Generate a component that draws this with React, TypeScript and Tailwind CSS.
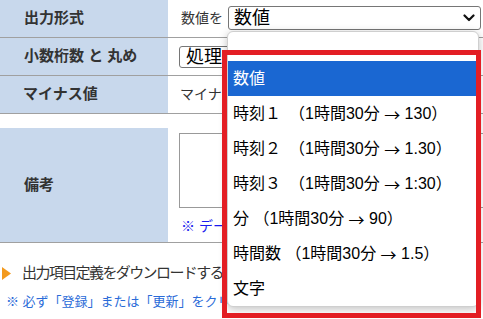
import React from "react";

const jp = { fontFamily: '"Liberation Sans", "Noto Sans CJK JP", sans-serif' };
const cjk = { fontFamily: '"Noto Sans CJK JP", sans-serif' };

function Chevron() {
  return (
    <svg width="12" height="8" viewBox="0 0 12 8" className="shrink-0">
      <path d="M1.5 1.5 L6 6 L10.5 1.5" fill="none" stroke="#111" strokeWidth="2.2" strokeLinecap="round" strokeLinejoin="round" />
    </svg>
  );
}

const options: [string, string][] = [
  ["数値", ""],
  ["時刻１　（1時間30分 ", " 130）"],
  ["時刻２　（1時間30分 ", " 1.30）"],
  ["時刻３　（1時間30分 ", " 1:30）"],
  ["分 （1時間30分 ", " 90）"],
  ["時間数 （1時間30分 ", " 1.5）"],
  ["文字", ""],
];

export default function App() {
  return (
    <div className="relative w-[483px] h-[319px] overflow-hidden bg-white text-[#333]" style={jp}>
      {/* table */}
      <div className="flex flex-col">
        <div className="grid grid-cols-[168px_1fr] h-[38px] border-b border-[#a0a0a0]">
          <div className="bg-[#c8d8ec] flex items-center pl-[24px] text-[15px] font-bold text-[#333]">出力形式</div>
          <div className="flex items-center pl-[13px] gap-[5px]">
            <span className="text-[14px] text-[#333]">数値を</span>
            <div className="flex items-center justify-between h-[24px] w-[253px] border border-[#767676] rounded-[3px] pl-[5px] pr-[5px] -mt-[1px]">
              <span className="text-[18px] text-black leading-none">数値</span>
              <Chevron />
            </div>
          </div>
        </div>
        <div className="grid grid-cols-[168px_1fr] h-[38px] border-b border-[#a0a0a0]">
          <div className="bg-[#c8d8ec] flex items-center pl-[24px] text-[15px] font-bold text-[#333] whitespace-pre">小数桁数 と 丸め</div>
          <div className="flex items-center pl-[11px]">
            <div className="flex items-center h-[22px] w-[120px] border border-[#767676] rounded-[3px] pl-[6px]">
              <span className="text-[18px] text-black leading-none whitespace-nowrap">処理</span>
            </div>
          </div>
        </div>
        <div className="grid grid-cols-[168px_1fr] h-[38px] border-b border-[#a0a0a0]">
          <div className="bg-[#c8d8ec] flex items-center pl-[23px] text-[15px] font-bold text-[#333]">マイナス値</div>
          <div className="flex items-center pl-[12px]">
            <span className="text-[14px] text-[#333] whitespace-nowrap">マイナ</span>
          </div>
        </div>
        <div className="h-[14px]" />
        <div className="grid grid-cols-[168px_1fr] h-[115px] border-b border-[#a0a0a0]">
          <div className="bg-[#c8d8ec] flex items-center pl-[24px] text-[15px] font-bold text-[#333]">備考</div>
          <div className="flex flex-col pl-[11px] pt-[5px]">
            <div className="h-[75px] w-[320px] border border-[#999]" />
            <div className="mt-[8px] pl-[2px] text-[14px] text-[#1a1aee] whitespace-nowrap">※ デー</div>
          </div>
        </div>
        <div className="flex items-center h-[30px] mt-[15px] pl-[2px]">
          <svg width="9" height="13" viewBox="0 0 9 13" className="shrink-0">
            <polygon points="0,0 9,6.5 0,13" fill="#f39a1e" />
          </svg>
          <span className="ml-[11px] text-[15px] tracking-[-1.6px] text-[#333] whitespace-nowrap">出力項目定義をダウンロードする</span>
        </div>
        <div className="ml-[6px] mt-[4px] text-[13px] text-[#2a6bd8] whitespace-nowrap">※ 必ず「登録」または「更新」をクリ</div>
      </div>

      {/* dropdown popup */}
      <div className="absolute left-[227px] top-[31px] w-[252px] h-[276px] bg-white border border-[#cfcfcf] rounded-[6px] shadow-[0_2px_8px_rgba(0,0,0,0.25)] pt-[29px] overflow-hidden">
        {options.map(([a, b], i) => (
          <div
            key={i}
            className={
              i === 0
                ? "h-[35px] flex items-center pl-[5px] bg-[#1a67d2] text-white text-[16px] whitespace-pre"
                : "h-[35px] flex items-center pl-[5px] text-black text-[16px] whitespace-pre"
            }
          >
            {a}
            {b && <span style={cjk}>→</span>}
            {b}
          </div>
        ))}
      </div>

      {/* red annotation box */}
      <div className="absolute left-[222px] top-[50px] w-[259px] h-[268px] border-[5px] border-[#e31e24]" />
    </div>
  );
}
